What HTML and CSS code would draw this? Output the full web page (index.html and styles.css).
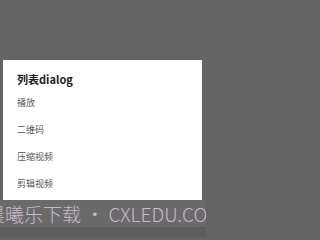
FILE: index.html
```html
<!DOCTYPE html>
<html>
<head>
<meta charset="utf-8">
<link rel="stylesheet" href="styles.css">
</head>
<body>
<div class="screen">
  <div class="dim"></div>
  <div class="dialog">
    <div class="title">列表dialog</div>
    <div class="item">播放</div>
    <div class="item">二维码</div>
    <div class="item">压缩视频</div>
    <div class="item">剪辑视频</div>
  </div>
  <div class="band"><span class="mark">晨曦乐下载 • CXLEDU.CO</span></div>
  <div class="rest"></div>
</div>
</body>
</html>
```
FILE: styles.css
```css
html, body {
  margin: 0;
  padding: 0;
  background: #646464;
}
body {
  width: 206px;
  height: 237px;
  overflow: hidden;
  font-family: "Noto Sans CJK SC", "Noto Sans", sans-serif;
}
.screen {
  display: flex;
  flex-direction: column;
  width: 206px;
  height: 237px;
  overflow: hidden;
  background: #646464;
}
.dim {
  height: 60px;
  flex: none;
}
.dialog {
  flex: none;
  height: 140px;
  box-sizing: border-box;
  margin: 0 4px 0 3px;
  background: #ffffff;
  padding: 11px 0 3px 14px;
  display: flex;
  flex-direction: column;
}
.title {
  font-size: 11px;
  font-weight: 700;
  line-height: 16px;
  color: #212121;
  margin-bottom: 2px;
}
.item {
  font-size: 9px;
  line-height: 27px;
  height: 27px;
  color: #555555;
}
.band {
  flex: none;
  height: 27px;
  background: #6a6a6a;
  overflow: hidden;
  white-space: nowrap;
  display: flex;
  align-items: center;
}
.mark {
  margin-left: -14px;
  font-size: 19px;
  font-weight: 300;
  line-height: 27px;
  color: #c9b9cd;
}
.rest {
  flex: 1;
  background: #5d5d5d;
}
```
